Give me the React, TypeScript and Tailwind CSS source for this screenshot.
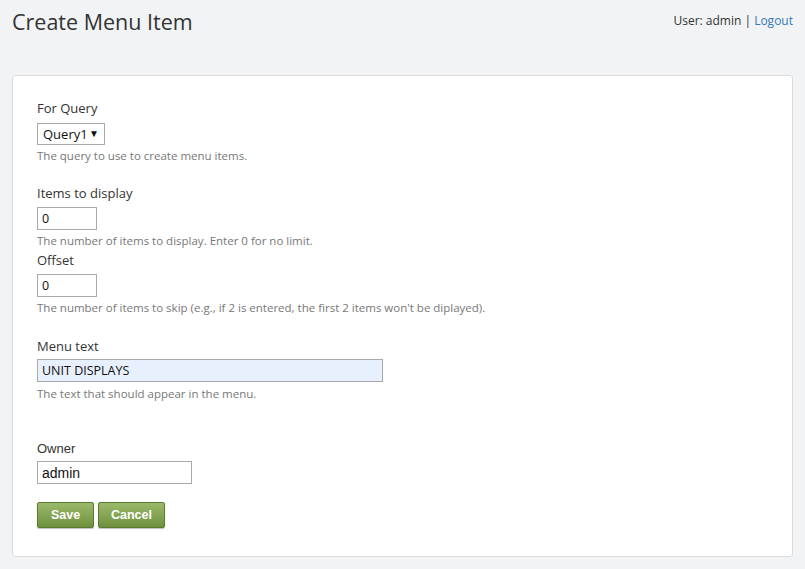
import React, { useState } from "react";

const sans = "font-['Segoe_UI','Open_Sans','Noto_Sans',sans-serif]";
const arial = "font-['Liberation_Sans',Arial,sans-serif]";

function Label({ children, className = "" }: { children: React.ReactNode; className?: string }) {
  return <div className={`h-[20px] leading-[20px] text-[13px] text-[#333] ${className}`}>{children}</div>;
}

function Help({ children, className = "" }: { children: React.ReactNode; className?: string }) {
  return <div className={`h-[18px] leading-[18px] text-[11.5px] text-[#777] ${className}`}>{children}</div>;
}

const inputCls =
  "block h-[23px] border border-[#aaa] px-[4px] text-[12.5px] text-[#111] outline-none";

const btnCls =
  "h-[26px] rounded-[2px] border border-[#5a7a2e] bg-gradient-to-b from-[#9bb96a] to-[#6f923e] text-[12.5px] font-bold text-white shadow-[0_1px_1px_rgba(0,0,0,0.25)]";

export default function App() {
  const [query, setQuery] = useState("Query1");
  const [items, setItems] = useState("0");
  const [offset, setOffset] = useState("0");
  const [menuText, setMenuText] = useState("UNIT DISPLAYS");
  const [owner, setOwner] = useState("admin");

  return (
    <div className={`min-h-[569px] bg-[#f2f3f5] px-[12px] pt-[7px] pb-[12px] ${sans}`}>
      <div className="flex items-start justify-between">
        <h1 className="text-[21.5px] leading-[30px] text-[#333] font-normal">Create Menu Item</h1>
        <div className="mt-[5px] mr-0 text-[12px] leading-[18px] text-[#333]">
          User: admin | <a href="#" className="text-[#337ab7]">Logout</a>
        </div>
      </div>

      <form
        className="mt-[38px] rounded-[3px] border border-[#dcdcdc] bg-white pl-[24px] pt-[22px] pb-[28px]"
        onSubmit={(e) => e.preventDefault()}
      >
        <Label>For Query</Label>
        <div className="relative mt-[5px] w-[68px]">
          <select
            value={query}
            onChange={(e) => setQuery(e.target.value)}
            className="block h-[22px] w-[68px] appearance-none border border-[#aaa] bg-white pl-[5px] text-[13px] leading-[20px] text-[#111] outline-none"
          >
            <option>Query1</option>
          </select>
          <span className="pointer-events-none absolute right-[6px] top-[2px] text-[10px] leading-[16px] text-[#111]">▼</span>
        </div>
        <Help className="mt-[2px]">The query to use to create menu items.</Help>

        <Label className="mt-[18px]">Items to display</Label>
        <input value={items} onChange={(e) => setItems(e.target.value)} className={`${inputCls} mt-[4px] w-[60px]`} />
        <Help className="mt-[2px]">The number of items to display. Enter 0 for no limit.</Help>

        <Label>Offset</Label>
        <input value={offset} onChange={(e) => setOffset(e.target.value)} className={`${inputCls} mt-[4px] w-[60px]`} />
        <Help className="mt-[2px]">
          The number of items to skip (e.g., if 2 is entered, the first 2 items won't be diplayed).
        </Help>

        <Label className="mt-[19px]">Menu text</Label>
        <input
          value={menuText}
          onChange={(e) => setMenuText(e.target.value)}
          className={`${inputCls} mt-[3px] w-[346px] bg-[#e8f0fe]`}
        />
        <Help className="mt-[3px]">The text that should appear in the menu.</Help>

        <Label className={`mt-[36px] ${arial}`}>Owner</Label>
        <input
          value={owner}
          onChange={(e) => setOwner(e.target.value)}
          className={`${inputCls} mt-[2px] w-[155px] text-[14px] ${arial}`}
        />

        <div className="mt-[18px] flex gap-[4px]">
          <button className={`${btnCls} w-[57px] ${arial}`}>Save</button>
          <button type="button" className={`${btnCls} w-[67px] ${arial}`}>
            Cancel
          </button>
        </div>
      </form>
    </div>
  );
}
